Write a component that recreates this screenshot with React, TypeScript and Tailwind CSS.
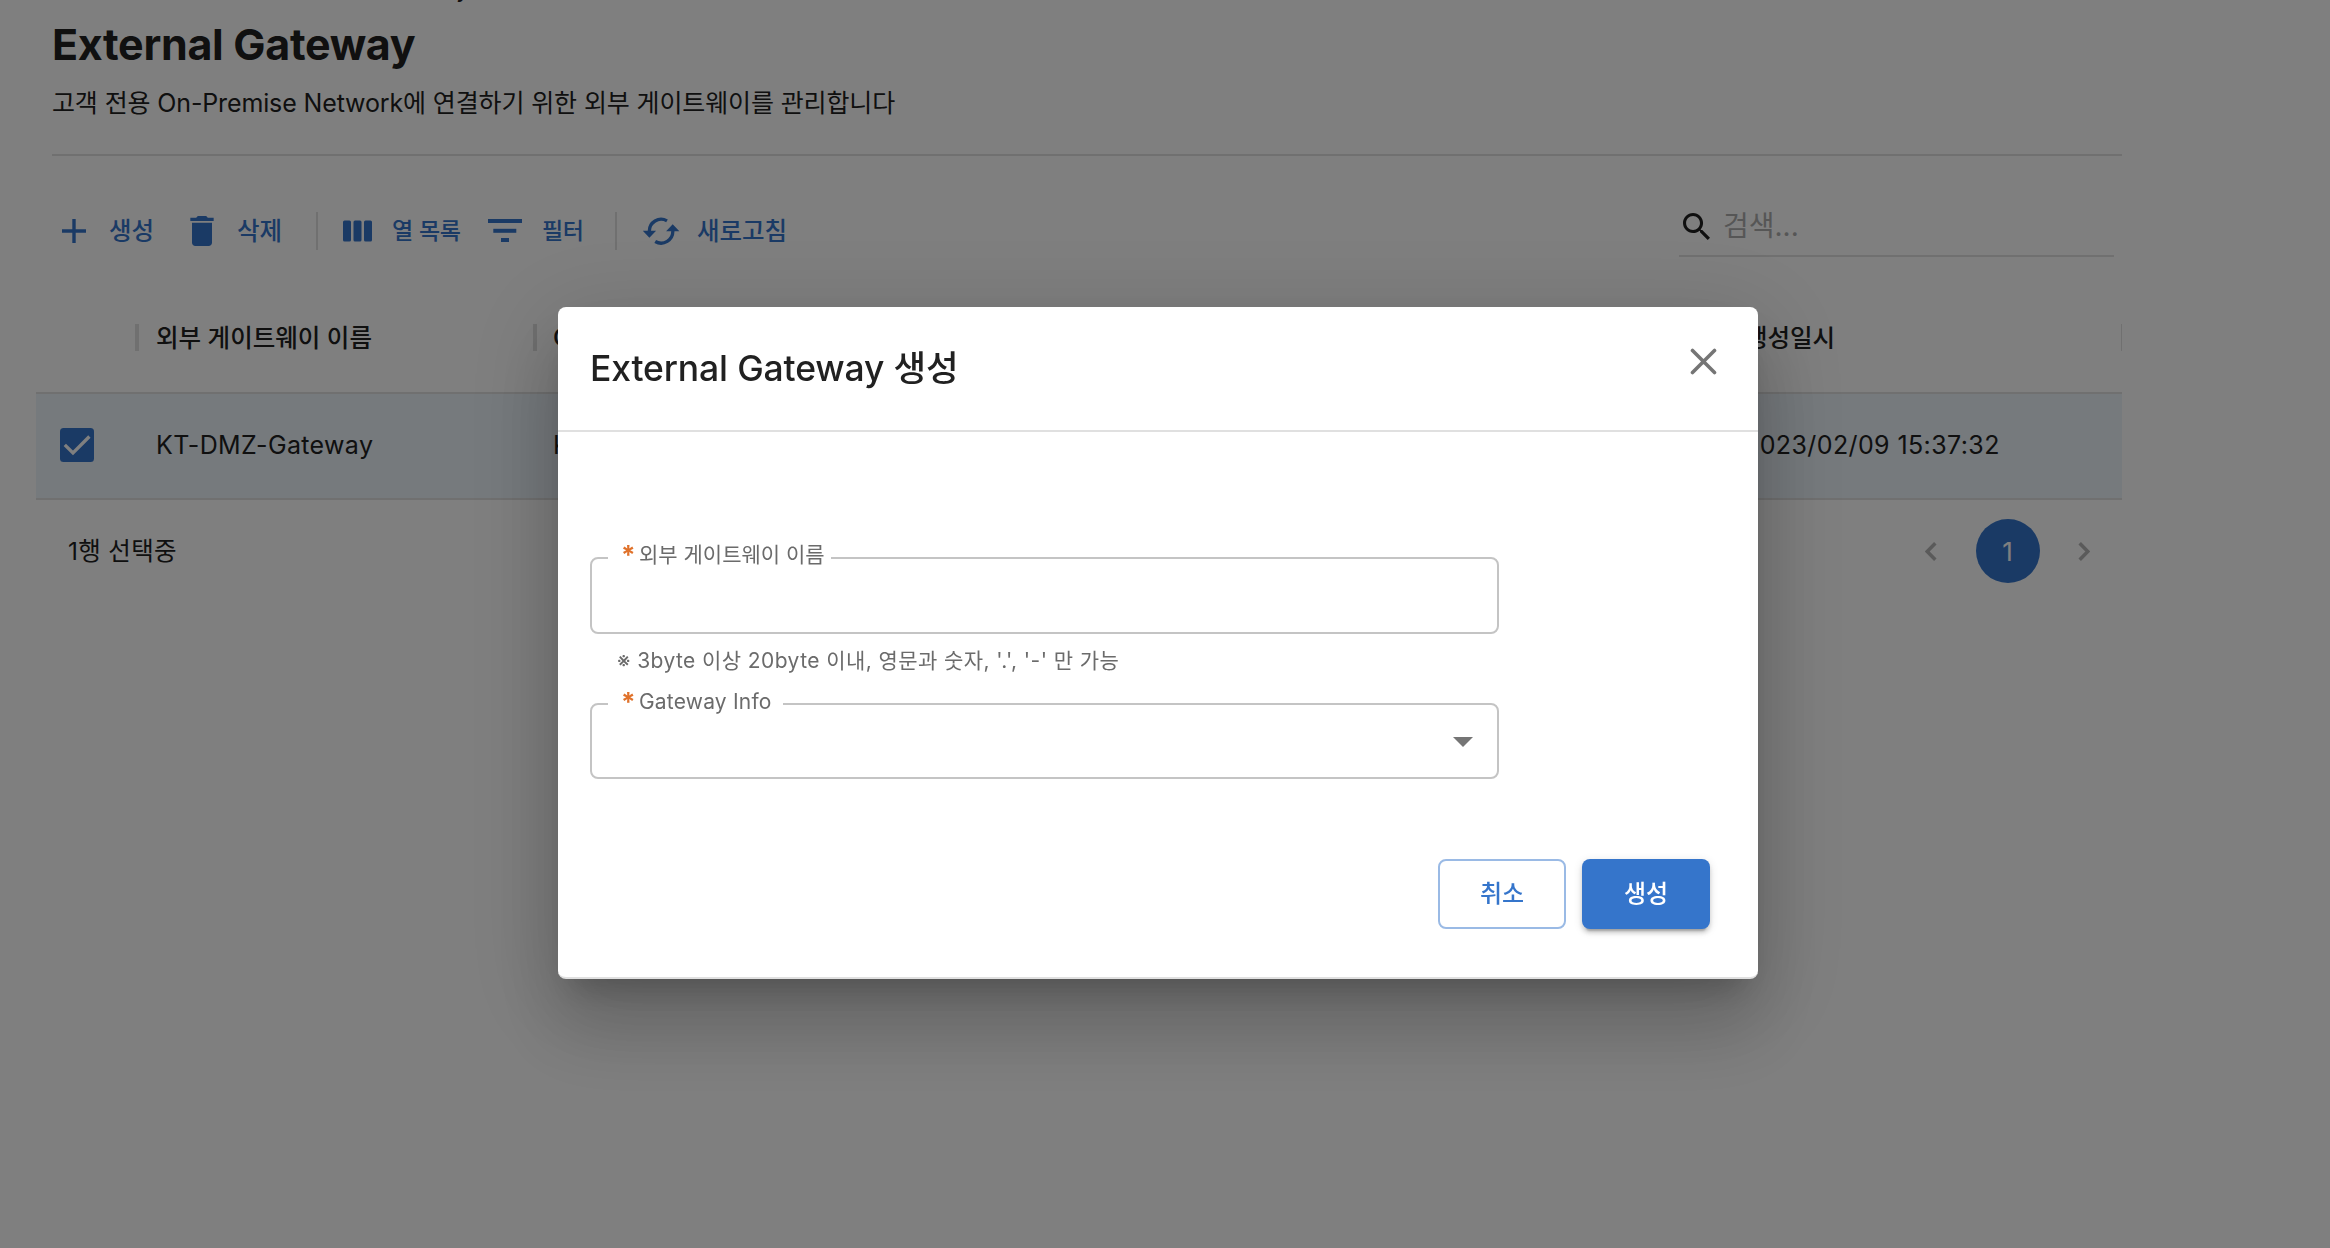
import type { ReactNode } from "react";

const BLUE = "#3575cb";

function PlusIcon() {
  return (
    <svg width="24" height="24" viewBox="0 0 24 24" fill={BLUE}>
      <path d="M10.3 0h3.4v10.3H24v3.4H13.7V24h-3.4V13.7H0v-3.4h10.3z" />
    </svg>
  );
}

function TrashIcon() {
  return (
    <svg width="24" height="30" viewBox="5 3 14 18" fill={BLUE}>
      <path d="M6 19c0 1.100.9 2 2 2h8c1.100 0 2-.9 2-2V7H6zM19 4h-3.500l-1-1h-5l-1 1H5v2h14z" />
    </svg>
  );
}

function ColumnsIcon() {
  return (
    <svg width="30" height="22" viewBox="0 0 30 22" fill={BLUE}>
      <rect x="0" y="0.500" width="8" height="21" rx="1.500" />
      <rect x="10.500" y="0.500" width="8" height="21" rx="1.500" />
      <rect x="21" y="0.500" width="8" height="21" rx="1.500" />
    </svg>
  );
}

function FilterIcon() {
  return (
    <svg width="34" height="24" viewBox="0 0 34 24" fill={BLUE}>
      <rect x="0" y="0" width="34" height="4" />
      <rect x="5.300" y="9.800" width="23" height="4" />
      <rect x="13" y="19" width="8" height="4" />
    </svg>
  );
}

function RefreshIcon() {
  return (
    <svg width="37" height="28" viewBox="0 0 37 28" fill="none">
      <g stroke={BLUE} strokeWidth="3.300">
        <path d="M6.400 14.600A11.700 11.700 0 0 1 24 3.900" />
        <path d="M29.800 13.800A11.700 11.700 0 0 1 12.200 24.500" />
      </g>
      <path d="M-.2 13.800h13.300l-6.700 7zM23.100 14.200h13.300l-6.700-7z" fill={BLUE} />
    </svg>
  );
}

function SearchIcon() {
  return (
    <svg width="27" height="27" viewBox="3 3 17.490 17.490" fill="#212121">
      <path d="M15.500 14h-.79l-.28-.27C15.410 12.590 16 11.110 16 9.500 16 5.910 13.090 3 9.500 3S3 5.910 3 9.500 5.910 16 9.500 16c1.610 0 3.090-.59 4.230-1.570l.27.28v.79l5 4.990L20.490 19zm-6 0C7.010 14 5 11.990 5 9.500S7.010 5 9.500 5 14 7.010 14 9.500 11.990 14 9.500 14z" />
    </svg>
  );
}

function Chevron({ flip = false }: { flip?: boolean }) {
  return (
    <svg
      width="12"
      height="19"
      viewBox="0 0 12 19"
      fill="none"
      stroke="#b4b4b4"
      strokeWidth="3.500"
      className={flip ? "rotate-180" : ""}
    >
      <path d="M10.300 1.200L2.200 9.500l8.100 8.300" />
    </svg>
  );
}

function ToolButton({ icon, label, box, iconBox }: { icon: ReactNode; label: string; box: string; iconBox: string }) {
  return (
    <button className={`flex h-full items-center whitespace-nowrap text-left ${box}`}>
      <span className={`flex shrink-0 items-center ${iconBox}`}>{icon}</span>
      <span className="leading-[36px] font-medium text-[#3575cb]">{label}</span>
    </button>
  );
}

function FieldLabel({ text, box }: { text: string; box: string }) {
  return (
    <label className={`absolute left-[16px] flex h-[30px] items-center bg-white pl-[13px] whitespace-nowrap ${box}`}>
      <span className="w-[18px] shrink-0 text-[26px] leading-[30px] font-bold text-[#e0722b]">*</span>
      <span>{text}</span>
    </label>
  );
}

export default function App() {
  return (
    <div className="h-[1248px] w-[2330px] overflow-hidden bg-white font-['Inter','Noto_Sans_CJK_KR',sans-serif] text-[#212121]">
      <div className="ml-[52px] w-[2070px]">
        <div className="h-[18px] overflow-hidden pl-[404px]">
          <div className="-mt-[23px] text-[24px] leading-[24px]">y</div>
        </div>
        <h1 className="text-[43px] leading-[52px] font-bold tracking-[-0.3px]">External Gateway</h1>
        <p className="mt-[15px] text-[25px] leading-[36px] tracking-[-0.13px]">
          고객 전용 On-Premise Network에 연결하기 위한 외부 게이트웨이를 관리합니다
        </p>
        <div className="mt-[33px] h-[2px] bg-[#e0e0e0]" />

        <div className="flex h-[101px] items-end justify-between pr-[8px] pl-[10px]">
          <div className="mb-[7px] flex h-[38px] items-center">
            <ToolButton icon={<PlusIcon />} label="생성" box="w-[128px] text-[24.500px]" iconBox="w-[47px]" />
            <ToolButton icon={<TrashIcon />} label="삭제" box="w-[126px] text-[24.500px]" iconBox="w-[47px]" />
            <div className="mr-[25px] h-full w-[2px] bg-[#e0e0e0]" />
            <ToolButton icon={<ColumnsIcon />} label="열 목록" box="w-[145px] text-[23px] tracking-[-0.2px]" iconBox="w-[49px]" />
            <ToolButton icon={<FilterIcon />} label="필터" box="w-[127px] text-[23px] tracking-[-0.5px]" iconBox="w-[54px]" />
            <div className="mr-[26px] h-full w-[2px] bg-[#e0e0e0]" />
            <ToolButton icon={<RefreshIcon />} label="새로고침" box="w-[145px] text-[24.500px]" iconBox="w-[54px]" />
          </div>
          <div className="flex h-[62px] w-[435px] items-center border-b-2 border-[#e0e0e0] pt-[2px] pl-[4px]">
            <SearchIcon />
            <span className="ml-[13px] text-[28px] leading-[40px] text-[#adadad]">검색...</span>
          </div>
        </div>
      </div>

      <div className="mt-[25px] ml-[36px] w-[2086px]">
        <div className="flex h-[110px] items-center text-[24.500px] font-medium">
          <div className="flex w-[103px] justify-end">
            <div className="h-[27px] w-[4px] bg-[#e0e0e0]" />
          </div>
          <div className="flex w-[398px] items-center justify-between pl-[17px]">
            <span className="pt-[2px]">외부 게이트웨이 이름</span>
            <div className="h-[27px] w-[4px] bg-[#e0e0e0]" />
          </div>
          <div className="w-[1191px] pl-[16px]">Gateway Info</div>
          <div className="flex flex-1 items-center justify-between pl-[17px]">
            <span className="pt-[2px]">생성일시</span>
            <div className="h-[27px] w-px bg-[#e0e0e0]" />
          </div>
        </div>
        <div className="flex h-[108px] items-center border-y-2 border-[#e0e0e0] bg-[#ecf4fa] text-[25px]">
          <div className="w-[120px] pb-[2px] pl-[23.500px]">
            <svg width="34" height="34" viewBox="0 0 34 34" className="block">
              <rect width="34" height="34" rx="3.500" fill={BLUE} />
              <path d="M4.800 16.800l8.200 8.200L29.400 8.500" fill="none" stroke="#fff" strokeWidth="3.300" />
            </svg>
          </div>
          <div className="w-[397px] tracking-[0.35px]">KT-DMZ-Gateway</div>
          <div className="w-[1191px]">KT-DMZ</div>
          <div className="tracking-[0.4px]">2023/02/09 15:37:32</div>
        </div>
        <div className="flex h-[102px] items-center justify-between pr-[6px] pl-[32px]">
          <span className="text-[24.500px] tracking-[0.3px]">1행 선택중</span>
          <div className="flex gap-[12.500px]">
            <button className="flex size-[64px] items-center justify-center">
              <Chevron />
            </button>
            <button className="flex size-[64px] items-center justify-center rounded-full bg-[#3575cb] text-[26px] text-white">
              1
            </button>
            <button className="flex size-[64px] items-center justify-center">
              <Chevron flip />
            </button>
          </div>
        </div>
      </div>

      <div className="fixed inset-0 flex items-start justify-center bg-black/50 pt-[307px] pr-[14px]">
        <div
          role="dialog"
          className="h-[672px] w-[1200px] overflow-hidden rounded-[8px] border-b-2 border-[#e0e0e0] bg-white shadow-[0_22px_30px_-14px_rgba(0,0,0,0.2),0_48px_76px_6px_rgba(0,0,0,0.14),0_18px_92px_16px_rgba(0,0,0,0.12)]"
        >
          <div className="flex h-[125px] items-center justify-between border-b-2 border-[#e0e0e0] pr-[41px] pl-[32px]">
            <h2 className="text-[35.500px] leading-[56px] font-medium tracking-[-0.15px]">External Gateway 생성</h2>
            <button className="mb-[14px]">
              <svg width="27" height="27" viewBox="0 0 27 27" fill="none" stroke="#757575" strokeWidth="3.600" strokeLinecap="round">
                <path d="M2.500 2.500l22 22M24.500 2.500l-22 22" />
              </svg>
            </button>
          </div>

          <div className="w-[941px] pt-[125px] pl-[32px] text-[21px] text-[#6b6b6b]">
            <div className="relative h-[77px] rounded-[8px] border-2 border-[#c4c4c4]">
              <FieldLabel text="외부 게이트웨이 이름" box="-top-[19px] w-[223px]" />
            </div>
            <p className="mt-[12px] pl-[27px] leading-[30px] tracking-[0.42px] whitespace-nowrap">
              ※ 3byte 이상 20byte 이내, 영문과 숫자, '.', '-' 만 가능
            </p>
            <div className="relative mt-[27px] flex h-[76px] items-center justify-end rounded-[8px] border-2 border-[#c4c4c4] pt-[1px] pr-[24px]">
              <FieldLabel text="Gateway Info" box="-top-[18px] w-[175px] tracking-[0.2px]" />
              <svg width="20" height="10" viewBox="0 0 20 10" fill="#757575">
                <path d="M0 0h20L10 10z" />
              </svg>
            </div>
          </div>

          <div className="mt-[80px] flex justify-end gap-[16px] pr-[48px] text-[24px] font-medium">
            <button className="flex h-[70px] w-[128px] items-center justify-center rounded-[8px] border-2 border-[#9abae5] text-[#3575cb]">
              취소
            </button>
            <button className="flex h-[70px] w-[128px] items-center justify-center rounded-[8px] bg-[#3575cb] text-white shadow-[0_6px_2px_-4px_rgba(0,0,0,0.2),0_4px_4px_0_rgba(0,0,0,0.14),0_2px_10px_0_rgba(0,0,0,0.12)]">
              생성
            </button>
          </div>
        </div>
      </div>
    </div>
  );
}
